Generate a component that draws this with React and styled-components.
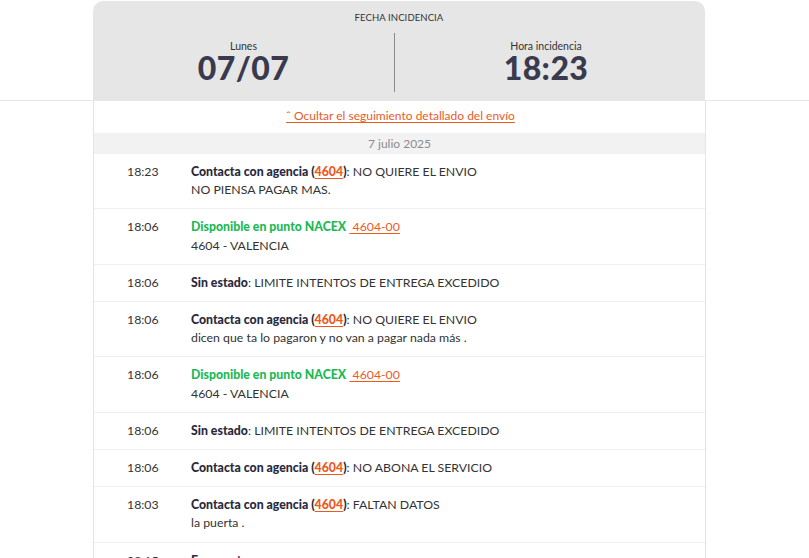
import React from 'react';
import styled, { createGlobalStyle } from 'styled-components';

const GlobalStyle = createGlobalStyle`
  html, body {
    margin: 0;
    padding: 0;
    background: #ffffff;
  }
  body {
    font-family: Lato, "Noto Sans", Arial, sans-serif;
    color: #333333;
    overflow: hidden;
  }
`;

const TopBand = styled.div`
  border-bottom: 1px solid #e6e6e6;
  padding-top: 1px;
`;

const Header = styled.header`
  width: 612px;
  margin-left: 93px;
  height: 99px;
  box-sizing: border-box;
  background: #e6e6e6;
  border-radius: 10px 10px 0 0;
  padding-top: 11px;
`;

const HeaderTitle = styled.div`
  text-align: center;
  font-size: 9.5px;
  line-height: 12px;
  color: #333;
  letter-spacing: 0.1px;
`;

const HeaderCols = styled.div`
  display: grid;
  grid-template-columns: 301px 1px 1fr;
  margin-top: 9px;
  height: 59px;
`;

const HeaderCol = styled.div`
  display: flex;
  flex-direction: column;
  align-items: center;
  padding-top: 7px;
  padding-right: ${({ $shift }) => ($shift ? '8px' : '0')};
`;

const Divider = styled.div`
  background: #8a8a8a;
`;

const ColLabel = styled.div`
  font-size: 10.5px;
  line-height: 12px;
  color: #333;
`;

const BigValue = styled.div`
  font-size: 32px;
  line-height: 28px;
  margin-top: 2px;
  font-weight: 900;
  color: #3a3a4f;
  letter-spacing: 0.4px;
`;

const Body = styled.section`
  width: 613px;
  margin-left: 93px;
  box-sizing: border-box;
  border-left: 1px solid #e4e4e4;
  border-right: 1px solid #e4e4e4;
`;

const ToggleRow = styled.div`
  height: 32px;
  box-sizing: border-box;
  padding-bottom: 3px;
  display: flex;
  align-items: center;
  justify-content: center;
`;

const ToggleLink = styled.a`
  color: #ec5a1e;
  font-size: 12px;
  text-decoration: underline;
  text-underline-offset: 2px;
  cursor: pointer;
  margin-left: 2px;
`;

const DateBand = styled.div`
  background: #f2f2f2;
  height: 21px;
  line-height: 21px;
  text-align: center;
  font-size: 12px;
  color: #8c8c8c;
`;

const Row = styled.div`
  display: grid;
  grid-template-columns: 97px 1fr;
  padding: 9px 0 9px 0;
  border-bottom: 1px solid #efefef;
  font-size: 12.3px;
  line-height: 18.2px;
`;

const Time = styled.div`
  padding-left: 33px;
  color: #333;
`;

const Detail = styled.div`
  color: #333;
`;

const Label = styled.b`
  font-weight: 900;
  color: ${({ $green }) => ($green ? '#1db954' : '#2a2a3c')};
`;

const Code = styled.a`
  color: #ec5a1e;
  font-weight: ${({ $bold }) => ($bold ? 900 : 400)};
  text-decoration: underline;
  text-underline-offset: 2px;
`;

const events = [
  { time: '18:23', type: 'agency', text: 'NO QUIERE EL ENVIO', extra: 'NO PIENSA PAGAR MAS.' },
  { time: '18:06', type: 'point', extra: '4604 - VALENCIA' },
  { time: '18:06', type: 'none', text: 'LIMITE INTENTOS DE ENTREGA EXCEDIDO' },
  { time: '18:06', type: 'agency', text: 'NO QUIERE EL ENVIO', extra: 'dicen que ta lo pagaron y no van a pagar nada más .' },
  { time: '18:06', type: 'point', extra: '4604 - VALENCIA' },
  { time: '18:06', type: 'none', text: 'LIMITE INTENTOS DE ENTREGA EXCEDIDO' },
  { time: '18:06', type: 'agency', text: 'NO ABONA EL SERVICIO' },
  { time: '18:03', type: 'agency', text: 'FALTAN DATOS', extra: 'la puerta .' },
  { time: '08:15', type: 'route' },
];

const EventText = ({ ev }) => {
  if (ev.type === 'agency') {
    return (
      <>
        <Label>Contacta con agencia (<Code $bold>4604</Code>)</Label>: {ev.text}
      </>
    );
  }
  if (ev.type === 'point') {
    return (
      <>
        <Label $green>Disponible en punto NACEX</Label>{' '}
        <Code>&nbsp;4604-00</Code>
      </>
    );
  }
  if (ev.type === 'none') {
    return (
      <>
        <Label>Sin estado</Label>: {ev.text}
      </>
    );
  }
  return <Label>En reparto</Label>;
};

const App = () => (
  <>
    <GlobalStyle />
    <TopBand>
      <Header>
        <HeaderTitle>FECHA INCIDENCIA</HeaderTitle>
        <HeaderCols>
          <HeaderCol>
            <ColLabel>Lunes</ColLabel>
            <BigValue>07/07</BigValue>
          </HeaderCol>
          <Divider />
          <HeaderCol $shift>
            <ColLabel>Hora incidencia</ColLabel>
            <BigValue>18:23</BigValue>
          </HeaderCol>
        </HeaderCols>
      </Header>
    </TopBand>
    <Body>
      <ToggleRow>
        <ToggleLink>ˆ Ocultar el seguimiento detallado del envío</ToggleLink>
      </ToggleRow>
      <DateBand>7 julio 2025</DateBand>
      {events.map((ev, i) => (
        <Row key={i}>
          <Time>{ev.time}</Time>
          <Detail>
            <div>
              <EventText ev={ev} />
            </div>
            {ev.extra && <div>{ev.extra}</div>}
          </Detail>
        </Row>
      ))}
    </Body>
  </>
);

export default App;
